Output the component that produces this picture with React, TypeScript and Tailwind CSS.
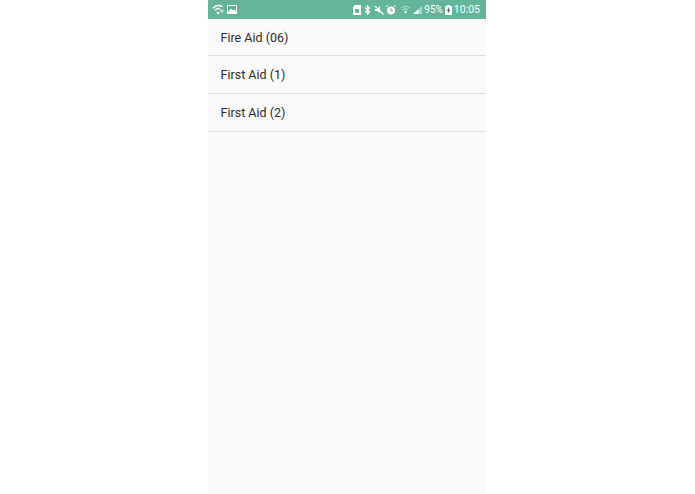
import React from "react";

const items = ["Fire Aid (06)", "First Aid (1)", "First Aid (2)"];

const WifiQuestion = () => (
  <svg width="12" height="11" viewBox="0 0 12 11" fill="none" stroke="#fff" strokeWidth="1.5">
    <path d="M1 4.2C3.5 1.4 7.5 1 10.6 2.6" />
    <path d="M3 6.3C4.6 4.7 6.4 4.4 8 4.7" />
    <path d="M5 8.2 L6.2 9.6 L7 8.4" />
    <circle cx="9.8" cy="7" r="1.2" strokeWidth="1" />
  </svg>
);

const ImageIcon = () => (
  <svg width="10" height="9" viewBox="0 0 10 9">
    <rect x="0" y="0" width="10" height="9" fill="#fff" />
    <rect x="1" y="1" width="8" height="6" fill="#63b49b" />
    <path d="M1 7 L4 3.5 L6 5.5 L7.2 4.5 L9 7Z" fill="#fff" />
  </svg>
);

const SimIcon = () => (
  <svg width="8" height="10" viewBox="0 0 8 10">
    <path d="M2 0H8V10H0V2Z" fill="#fff" />
    <rect x="2" y="4" width="4" height="4" fill="#63b49b" />
  </svg>
);

const Bluetooth = () => (
  <svg width="7" height="10" viewBox="0 0 7 10" fill="none" stroke="#fff" strokeWidth="1.2">
    <path d="M1 2.6L5.6 7L3.3 9.2V0.8L5.6 3L1 7.4" />
  </svg>
);

const Mute = () => (
  <svg width="10" height="10" viewBox="0 0 10 10">
    <path d="M1 4H3L6 1V8L3 6H1Z" fill="#fff" />
    <path d="M1 1L9.5 9.5" stroke="#fff" strokeWidth="1.3" />
  </svg>
);

const Alarm = () => (
  <svg width="10" height="10" viewBox="0 0 10 10">
    <circle cx="5" cy="5.4" r="4" fill="#fff" />
    <path d="M5 3V5.6H7" stroke="#63b49b" strokeWidth="1" fill="none" />
    <path d="M0 2L2 0M10 2L8 0" stroke="#fff" strokeWidth="1" />
  </svg>
);

const WifiFaded = () => (
  <svg width="9" height="9" viewBox="0 0 10 9" fill="none" stroke="#fff" strokeOpacity="0.55" strokeWidth="1.2">
    <path d="M0.5 3C3 0.6 7 0.6 9.5 3" />
    <path d="M2.3 5C3.8 3.7 6.2 3.7 7.7 5" />
    <path d="M5 8.8L3.9 6.9C4.6 6.5 5.4 6.5 6.1 6.9Z" fill="#fff" />
  </svg>
);

const Signal = () => (
  <svg width="9" height="8" viewBox="0 0 10 9">
    <path d="M0 9L10 0V9Z" fill="#fff" fillOpacity="0.45" />
    <path d="M0 9L6 3.6V9Z" fill="#fff" />
  </svg>
);

const Battery = () => (
  <svg width="7" height="10" viewBox="0 0 7 10">
    <rect x="2" y="0" width="3" height="1" fill="#fff" />
    <rect x="0" y="1" width="7" height="9" fill="#fff" />
    <path d="M4 2L2 5.5H3.4L3 8.4L5 4.8H3.6Z" fill="#222" />
  </svg>
);

export default function App() {
  return (
    <div className="flex h-[494px] bg-white pl-[208px] font-['Roboto',sans-serif]">
      <div className="w-[278px] bg-[#fafafa]">
        <div className="h-[18.5px] bg-[#63b49b] flex items-center pl-[4px] pr-[6px] pt-[1px] text-white">
          <div className="flex items-center gap-[3px]">
            <WifiQuestion />
            <ImageIcon />
          </div>
          <div className="ml-auto flex items-center">
            <SimIcon />
            <div className="ml-[3px]"><Bluetooth /></div>
            <div className="ml-[3px]"><Mute /></div>
            <div className="ml-[2px]"><Alarm /></div>
            <div className="ml-[5px]"><WifiFaded /></div>
            <div className="ml-[3px]"><Signal /></div>
            <span className="ml-[2px] text-[10px] leading-none">95%</span>
            <div className="ml-[2px]"><Battery /></div>
            <span className="ml-[2px] text-[10.5px] leading-none">10:05</span>
          </div>
        </div>
        {items.map((item) => (
          <div
            key={item}
            className="flex items-center h-[37.75px] pt-[2px] border-b border-[#dcdcdc] pl-[12.5px] text-[12.5px] text-[#2a2a2a]"
          >
            {item}
          </div>
        ))}
      </div>
    </div>
  );
}
